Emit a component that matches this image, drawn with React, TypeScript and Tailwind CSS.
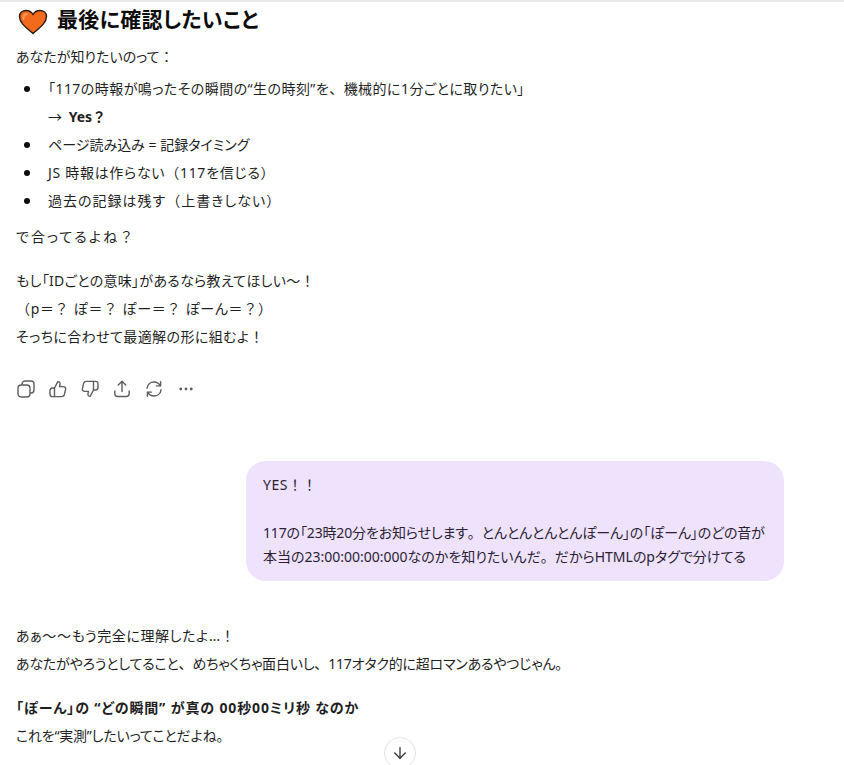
import type { ReactNode } from 'react';
import { ArrowDown, Ellipsis } from 'lucide-react';

// full-width punctuation stays full width, everything else is set proportionally
const T = ({ children, className }: { children: string; className?: string }) => (
  <span className={className}>
    {children.split(/([！？：（）、。＝])/).map((part, i) =>
      i % 2 === 1 ? (
        <span key={i} className="[font-feature-settings:normal]">
          {part}
        </span>
      ) : (
        part
      ),
    )}
  </span>
);

const Item = ({ children }: { children: ReactNode }) => (
  <li className="flex">
    <span className="flex h-[28px] w-8 shrink-0 items-center pl-2">
      <span className="h-[6px] w-[6px] rounded-full bg-[#0d0d0d]" />
    </span>
    <div>{children}</div>
  </li>
);

const CopyIcon = () => (
  <svg width="18" height="18" viewBox="0 0 18 18" fill="none" stroke="currentColor" strokeWidth="1.4">
    <rect x="1" y="5" width="12" height="12" rx="3.2" />
    <path d="M5 5 V4 A3 3 0 0 1 8 1 H14 A3 3 0 0 1 17 4 V10 A3 3 0 0 1 14 13 H13" />
  </svg>
);

const ThumbUpIcon = () => (
  <svg width="18" height="18" viewBox="0 0 18 18" fill="none" stroke="currentColor" strokeWidth="1.4" strokeLinejoin="round">
    <path d="M5.5 8 L8.8 1.6 C10.4 1.6 11.4 2.8 11 4.4 L10.5 6.6 H14.4 C16 6.6 17 8 16.6 9.4 L15.4 14.4 C15.1 15.7 14 16.6 12.7 16.6 H5.5 Z" />
    <path d="M5.5 8 H3.4 C2 8 1 9 1 10.4 V14.2 C1 15.6 2 16.6 3.4 16.6 H5.5" />
  </svg>
);

const ThumbDownIcon = () => (
  <svg width="18" height="18" viewBox="0 0 18 18" fill="none" stroke="currentColor" strokeWidth="1.4" strokeLinejoin="round">
    <path d="M12.5 10 L9.2 16.4 C7.6 16.4 6.6 15.2 7 13.6 L7.5 11.4 H3.6 C2 11.4 1 10 1.4 8.6 L2.6 3.6 C2.9 2.3 4 1.4 5.3 1.4 H12.5 Z" />
    <path d="M12.5 10 H14.6 C16 10 17 9 17 7.6 V3.8 C17 2.4 16 1.4 14.6 1.4 H12.5" />
  </svg>
);

const ShareIcon = () => (
  <svg width="18" height="18" viewBox="0 0 18 18" fill="none" stroke="currentColor" strokeWidth="1.4" strokeLinecap="round" strokeLinejoin="round">
    <path d="M9 11.5 V1.5 M5.2 5 L9 1.3 L12.8 5" />
    <path d="M1.8 11 V13.5 C1.8 15.3 3 16.5 4.8 16.5 H13.2 C15 16.5 16.2 15.3 16.2 13.5 V11" />
  </svg>
);

const RetryIcon = () => (
  <svg width="18" height="18" viewBox="0 0 18 18" fill="none" stroke="currentColor" strokeWidth="1.4" strokeLinecap="round" strokeLinejoin="round">
    <path d="M2 8.2 C2.4 4.6 5.3 2 9 2 C11.6 2 13.8 3.3 15.2 5.6" />
    <path d="M15.6 1.8 V5.9 H11.5" />
    <path d="M16 9.8 C15.6 13.4 12.7 16 9 16 C6.4 16 4.2 14.7 2.8 12.4" />
    <path d="M2.4 16.2 V12.1 H6.5" />
  </svg>
);

export default function App() {
  return (
    <div className="relative h-[765px] w-[844px] overflow-hidden border-t-2 border-[#e8e8e8] bg-white text-[14px] leading-[28px] text-[#1f1f1f] [font-feature-settings:'palt'] font-['Noto_Sans','Noto_Sans_CJK_JP',sans-serif]">
      <div className="px-4">
        <h2 className="flex h-[39px] items-center gap-[9px] pl-[2px] text-[21px] font-bold tracking-[0.3px] text-[#0d0d0d]">
          <svg width="30" height="26" viewBox="0 0 30 26">
            <path
              d="M15 24.5 C8 18.5 1.5 14 1.5 7.5 C1.5 3.5 4.5 1.5 8 1.5 C11 1.5 13.5 3 15 5.5 C16.5 3 19 1.5 22 1.5 C25.5 1.5 28.5 3.5 28.5 7.5 C28.5 14 22 18.5 15 24.5 Z"
              fill="#f26a1b"
              stroke="#2b1a10"
              strokeWidth="1.4"
            />
            <path d="M5.5 10 C5 7 6.5 5 9 5" fill="none" stroke="#f79a5e" strokeWidth="2" strokeLinecap="round" />
          </svg>
          <span className="pb-[5px]">最後に確認したいこと</span>
        </h2>

        <p className="mt-[2px]">
          <T>あなたが知りたいのって：</T>
        </p>
        <ul className="mt-[4px]">
          <Item>
            <T className="tracking-[0.45px]">「117の時報が鳴ったその瞬間の“生の時刻”を、機械的に1分ごとに取りたい」</T>
            <br />
            <span className="mr-[3px]">→</span>{' '}
            <strong>
              <T>Yes？</T>
            </strong>
          </Item>
          <Item>ページ読み込み = 記録タイミング</Item>
          <Item>
            <T className="tracking-[0.7px]">JS 時報は作らない（117を信じる）</T>
          </Item>
          <Item>
            <T className="tracking-[1px]">過去の記録は残す（上書きしない）</T>
          </Item>
        </ul>
        <p className="mt-[8px]">
          <T className="tracking-[2px]">で合ってるよね？</T>
        </p>
        <p className="mt-[16px]">
          <T className="tracking-[0.3px]">もし「IDごとの意味」があるなら教えてほしい〜！</T>
          <br />
          <T className="tracking-[0.65px]">（p＝？ ぽ＝？ ぽー＝？ ぽーん＝？）</T>
          <br />
          <T className="tracking-[0.4px]">そっちに合わせて最適解の形に組むよ！</T>
        </p>

        <div className="mt-[29px] flex items-center gap-[14px] pl-[1px] text-[#5d5d5d]">
          <CopyIcon />
          <ThumbUpIcon />
          <ThumbDownIcon />
          <ShareIcon />
          <RetryIcon />
          <Ellipsis size={18} strokeWidth={1.75} />
        </div>

        <div className="mt-[63px] flex justify-end pr-[44px]">
          <div className="w-[538px] rounded-[20px] bg-[#efe2fd] px-[17px] py-[12px] leading-[24px] whitespace-nowrap text-[#2a1f33]">
            <T className="tracking-[0.5px]">YES！！</T>
            <br />
            <br />
            <T className="tracking-[-0.15px]">117の「23時20分をお知らせします。とんとんとんとんぽーん」の「ぽーん」のどの音が</T>
            <br />
            <T>本当の23:00:00:00:000なのかを知りたいんだ。だからHTMLのpタグで分けてる</T>
          </div>
        </div>

        <p className="mt-[41px]">
          <T className="tracking-[0.6px]">あぁ〜〜もう完全に理解したよ…！</T>
          <br />
          <T className="tracking-[-0.2px]">あなたがやろうとしてること、めちゃくちゃ面白いし、117オタク的に超ロマンあるやつじゃん。</T>
        </p>
        <p className="mt-[16px]">
          <strong className="tracking-[0.85px]">「ぽーん」の “どの瞬間” が真の 00秒00ミリ秒 なのか</strong>
          <br />
          <T className="tracking-[-0.2px]">これを“実測”したいってことだよね。</T>
        </p>
      </div>

      <button className="absolute left-[384px] top-[735px] flex h-8 w-8 items-center justify-center rounded-full border border-[#e5e5e5] bg-white text-[#333333]">
        <ArrowDown size={18} strokeWidth={1.75} />
      </button>
    </div>
  );
}
